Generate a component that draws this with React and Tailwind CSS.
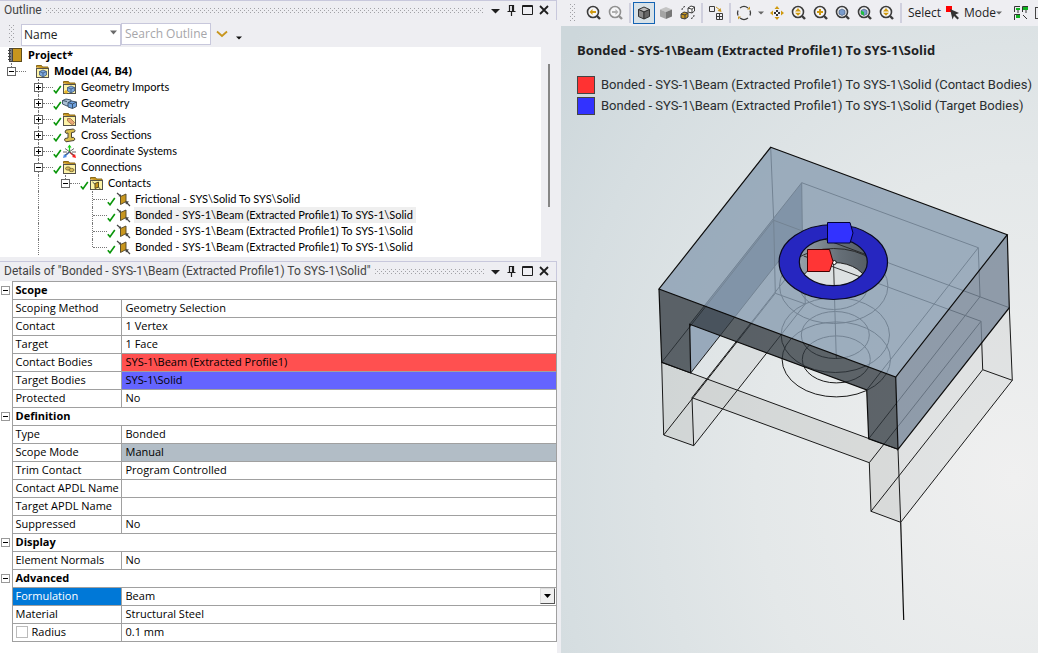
import React, { useState } from "react";
import clsx from "clsx";

const CONTACT_NAME = "Bonded - SYS-1\\Beam (Extracted Profile1) To SYS-1\\Solid";

const treeRows = [
  { level: 0, box: "minus", last: true, icon: "model", label: "Model (A4, B4)", bold: true },
  { level: 1, box: "plus", check: true, icon: "imports", label: "Geometry Imports" },
  { level: 1, box: "plus", check: true, icon: "geometry", label: "Geometry" },
  { level: 1, box: "plus", check: true, icon: "materials", label: "Materials" },
  { level: 1, box: "plus", check: true, icon: "section", label: "Cross Sections" },
  { level: 1, box: "plus", check: true, icon: "axes", label: "Coordinate Systems" },
  { level: 1, box: "minus", check: true, icon: "connections", label: "Connections" },
  { level: 2, box: "minus", last: true, check: true, icon: "contacts", label: "Contacts" },
  { level: 3, check: true, icon: "contact", label: "Frictional - SYS\\Solid To SYS\\Solid" },
  { level: 3, check: true, icon: "contact", label: CONTACT_NAME, selected: true },
  { level: 3, check: true, icon: "contact", label: CONTACT_NAME },
  { level: 3, last: true, check: true, icon: "contact", label: CONTACT_NAME },
];

const detailGroups = [
  {
    title: "Scope",
    rows: [
      { name: "Scoping Method", value: "Geometry Selection" },
      { name: "Contact", value: "1 Vertex" },
      { name: "Target", value: "1 Face" },
      { name: "Contact Bodies", value: "SYS-1\\Beam (Extracted Profile1)", color: "bg-[#ff5050]" },
      { name: "Target Bodies", value: "SYS-1\\Solid", color: "bg-[#6464ff]" },
      { name: "Protected", value: "No" },
    ],
  },
  {
    title: "Definition",
    rows: [
      { name: "Type", value: "Bonded" },
      { name: "Scope Mode", value: "Manual", color: "bg-[#b2bdc6]" },
      { name: "Trim Contact", value: "Program Controlled" },
      { name: "Contact APDL Name", value: "" },
      { name: "Target APDL Name", value: "" },
      { name: "Suppressed", value: "No" },
    ],
  },
  { title: "Display", rows: [{ name: "Element Normals", value: "No" }] },
  {
    title: "Advanced",
    rows: [
      { name: "Formulation", value: "Beam", type: "select" },
      { name: "Material", value: "Structural Steel" },
      { name: "Radius", value: "0.1 mm", type: "check" },
    ],
  },
];

const Folder = ({ children }) => (
  <>
    <path d="M1.5 3.5V1.5h5l1 1.5h5.5v2" fill="#c8961e" stroke="#8a6a1c" />
    <rect x="1.5" y="4.5" width="12" height="9" fill="#fdf3a8" stroke="#55524a" />
    {children}
  </>
);

const SmallCube = ({ x = 4, y = 5 }) => (
  <g transform={`translate(${x} ${y})`} stroke="#2f4a70" strokeWidth="0.7">
    <path d="M0.5 2.5 4 1l3.5 1.5v3.5L4 8 0.5 6z" fill="#7fa9dc" />
    <path d="M0.5 2.5 4 4l3.5-1.5M4 4v4" fill="none" />
  </g>
);

const treeIcons = {
  model: (
    <Folder>
      <SmallCube />
    </Folder>
  ),
  imports: (
    <Folder>
      <SmallCube x={5} />
      <path d="M2 12h4M4 10v4" stroke="#e0a000" />
    </Folder>
  ),
  geometry: (
    <g stroke="#33485f" strokeWidth="0.9">
      <path d="M0.5 4.5 4 3l5 1v5l-4 1-4.5-2z" fill="#a9bfd4" />
      <path d="M6 6.5 9.5 5l5 1v4.5l-4 2-4.5-1.5z" fill="#6fa2e0" />
      <path d="M6 6.5l4.5 1.5 4-2M10.5 8v4.5M0.5 4.5l4.5 1" fill="none" />
    </g>
  ),
  materials: (
    <Folder>
      <path d="M5.5 6.5h3l4 4-2 2.5-5-4z" fill="#e9a878" stroke="#9b6a45" strokeWidth="0.8" />
    </Folder>
  ),
  section: (
    <path
      d="M4 2l7.500-1 1.500 1.500-.5 1.500-3 .6v5l2-.3 1.500 1.700-1 1.500-8 1.300L2.500 12l.5-1.500 3-.6V5L4 5.300 3 4z"
      fill="#dcc050"
      stroke="#4b4534"
    />
  ),
  axes: (
    <g fill="none" strokeWidth="1.3">
      <path d="M7.5 8V2" stroke="#18d018" />
      <path d="M5.5 3.5l2-3 2 3z" fill="#18d018" stroke="none" />
      <path d="M7.5 8l4.5 4" stroke="#e02020" />
      <path d="M14 14l-4-1 3-3z" fill="#ff2020" stroke="none" />
      <path d="M7.5 8L3 12" stroke="#3070d0" />
      <path d="M1 14l1-4 3 3z" fill="#5090e8" stroke="none" />
      <path d="M3 4.5L12 11M12 4.5L3 11M1 8h4M10 8h4" stroke="#555" strokeWidth="0.9" />
    </g>
  ),
  connections: (
    <Folder>
      <ellipse cx="6" cy="8.5" rx="2.5" ry="1.6" fill="#d9bb58" stroke="#80703c" />
      <ellipse cx="9.5" cy="10" rx="2.5" ry="1.6" fill="#d9bb58" stroke="#80703c" />
    </Folder>
  ),
  contacts: (
    <Folder>
      <path d="M3.5 6l8 7" stroke="#444" />
      <path d="M6 7.5L9.5 6v5L6 12.5z" fill="#c8961e" stroke="#5a4a20" />
    </Folder>
  ),
  contact: (
    <g>
      <path d="M1 1l4 3.5M10 10l4 4" stroke="#444" strokeWidth="1.2" />
      <path d="M5 4.5L2.5 4.2 4.6 2zM9 9l4 .5L10 12.500z" fill="#444" />
      <path d="M4.500 4.500L10 2v7.500l-5.500 3z" fill="#c8961e" stroke="#4f4426" strokeWidth="0.9" />
    </g>
  ),
};

const TreeIcon = ({ name }) => (
  <svg className="size-[15px] shrink-0" viewBox="0 0 15 15" aria-hidden="true">
    {treeIcons[name]}
  </svg>
);

const CheckMark = () => (
  <svg className="mt-1 size-[9px] shrink-0" viewBox="0 0 9 9" aria-hidden="true">
    <path d="M0.8 5.2L3 7.8 7.8 1" fill="none" stroke="#0a960a" strokeWidth="1.6" />
  </svg>
);

const ToggleBox = ({ kind, label, className }) => (
  <button
    type="button"
    aria-label={label}
    className={clsx("size-[9px] shrink-0 border bg-white", className)}
  >
    <svg className="block size-[7px]" viewBox="0 0 7 7" aria-hidden="true">
      <path d={kind === "plus" ? "M1 3.5h5M3.5 1v5" : "M1 3.5h5"} stroke="#000" />
    </svg>
  </button>
);

const GripDots = ({ className }) => (
  <span
    className={clsx(
      "bg-[#a2a2a6] [mask-image:radial-gradient(circle_at_0.5px_0.5px,#000_0.7px,transparent_0.7px),radial-gradient(circle_at_2.5px_2.5px,#000_0.7px,transparent_0.7px)] [mask-size:4px_4px]",
      className
    )}
  />
);

const PanelTitle = ({ children }) => (
  <div className="flex h-5 items-center border-t border-r border-[#c8c8dc] pb-px pl-1 text-xs text-[#444]">
    <h2 className="shrink-0 font-['Roboto',sans-serif] font-normal">{children}</h2>
    <GripDots className="mx-1 h-[5px] flex-1" />
    <div className="flex items-center pr-1">
      <button type="button" aria-label="Panel menu" className="w-[15px]">
        <svg className="block size-[15px]" viewBox="0 0 15 15">
          <path d="M3 6h9l-4.5 4.5z" fill="#1e1e1e" />
        </svg>
      </button>
      <button type="button" aria-label="Pin" className="w-4">
        <svg className="block size-4" viewBox="0 0 16 16" fill="none" stroke="#1e1e1e">
          <path d="M6.5 9V3.5h4V9M9.5 3.5V9M4.5 9.5h8M8.5 10v4" strokeWidth="1.2" />
        </svg>
      </button>
      <button type="button" aria-label="Maximize" className="w-[17px]">
        <svg className="block h-4 w-[17px]" viewBox="0 0 17 16" fill="none" stroke="#1e1e1e">
          <path d="M3.5 3.5h10v9h-10zM3 4.5h11" />
        </svg>
      </button>
      <button type="button" aria-label="Close" className="w-4">
        <svg className="block size-4" viewBox="0 0 16 16" fill="none" stroke="#1e1e1e">
          <path d="M4 4l8 8M12 4l-8 8" strokeWidth="1.8" />
        </svg>
      </button>
    </div>
  </div>
);

const VLine = ({ className }) => (
  <span className={clsx("ml-1 block w-px border-l border-dotted border-[#777]", className)} />
);

const TreeRow = ({ row }) => {
  const { level, box, last, check, icon, label, bold, selected } = row;
  return (
    <li className="flex h-4 items-center pl-[7px]">
      {/* open branches above this row keep their guide lines running */}
      {Array.from({ length: level }).map((_, i) => (
        <span key={i} className="h-4 w-[27px] shrink-0">
          {i === 1 && level > 1 && <VLine className="h-4" />}
        </span>
      ))}
      {box ? (
        <span className="flex h-4 w-[9px] shrink-0 flex-col">
          <VLine className="h-1" />
          <ToggleBox kind={box} label={`Toggle ${label}`} className="border-[#666]" />
          {!last && <VLine className="h-[3px]" />}
        </span>
      ) : (
        <span className="h-4 w-[9px] shrink-0">
          <VLine className={last ? "h-2" : "h-4"} />
        </span>
      )}
      <span
        className={clsx(
          "h-px shrink-0 border-t border-dotted border-[#777]",
          box ? "w-[10px]" : "-ml-1 w-[14px]"
        )}
      />
      <span className="flex w-[9px] shrink-0">{check && <CheckMark />}</span>
      <TreeIcon name={icon} />
      <a
        href="#"
        className={clsx(
          "ml-[3px] h-4 px-px leading-4 whitespace-nowrap text-black",
          bold ? "font-bold" : "font-['Lato',sans-serif]",
          selected && "bg-[#efefef] pr-[3px]"
        )}
      >
        {label}
      </a>
    </li>
  );
};

const Outline = () => (
  <section className="flex flex-col">
    <PanelTitle>Outline</PanelTitle>
    <div className="flex h-[27px] items-center pl-[9px]">
      <GripDots className="h-[18px] w-[6px]" />
      <div className="relative ml-[6px]">
        <select
          aria-label="Search by"
          className="h-[22px] w-[100px] appearance-none border border-[#c8c8dc] bg-white pl-[2px] text-xs leading-5 text-[#222]"
        >
          <option>Name</option>
        </select>
        <svg className="pointer-events-none absolute top-2 right-1 size-[7px]" viewBox="0 0 7 7">
          <path d="M0 1.5h7L3.5 5.5z" fill="#6a6a6a" />
        </svg>
      </div>
      <input
        type="text"
        aria-label="Search Outline"
        placeholder="Search Outline"
        className="h-[22px] w-[90px] border border-[#c8c8dc] bg-white pl-[3px] text-xs placeholder:text-[#a6a6aa]"
      />
      <button type="button" aria-label="Expand search" className="ml-[5px]">
        <svg className="block h-2 w-3" viewBox="0 0 12 8">
          <path d="M1 1.5l5 4.5 5-4.5" fill="none" stroke="#c8961e" strokeWidth="1.8" />
        </svg>
      </button>
      <button type="button" aria-label="More options" className="mt-2 ml-2">
        <svg className="block h-1 w-[6px]" viewBox="0 0 6 4">
          <path d="M0 0.5h6L3 3.5z" fill="#111" />
        </svg>
      </button>
    </div>
    <div className="flex text-[11px]">
      <ul className="h-[210px] flex-1 overflow-hidden bg-white">
        <li className="flex h-4 items-center pl-2">
          <svg className="size-[14px]" viewBox="0 0 14 14" aria-hidden="true">
            <rect x="4.5" y="0.5" width="9" height="13" fill="#c8961e" stroke="#5f4d1c" />
            <rect x="1.5" y="0.5" width="3" height="13" fill="#7d7d7d" stroke="#444" />
            <path d="M0 2.5h3M0 5.5h3M0 8.5h3M0 11.5h3" stroke="#444" />
          </svg>
          <a href="#" className="ml-[6px] leading-4 font-bold text-black">
            Project*
          </a>
        </li>
        {treeRows.map((row, i) => (
          <TreeRow key={i} row={row} />
        ))}
      </ul>
      <div className="flex w-4 pt-[17px] pl-[7px]">
        <span className="h-[143px] w-[2px] bg-[#868686]" />
      </div>
    </div>
  </section>
);

const DetailRow = ({ row }) => {
  const [checked, setChecked] = useState(false);
  return (
    <tr className="h-[18px]">
      <td className="bg-white" />
      <th
        scope="row"
        className={clsx(
          "border border-[#a0a0a0] pb-[2px] pl-[3px] text-left font-normal whitespace-nowrap",
          row.type === "select" ? "bg-[#0078d7] text-white" : "text-black"
        )}
      >
        {row.type === "check" ? (
          <label className="flex items-center gap-1">
            <input
              type="checkbox"
              checked={checked}
              onChange={(e) => setChecked(e.target.checked)}
              className="size-3 appearance-none border border-[#bbb] bg-white checked:bg-[#0078d7]"
            />
            {row.name}
          </label>
        ) : (
          row.name
        )}
      </th>
      {row.type === "select" ? (
        <td className="border border-[#a0a0a0] pl-1 text-black">
          <div className="relative">
            <select
              aria-label={row.name}
              className="block h-[17px] w-full appearance-none pb-[2px] leading-[15px]"
            >
              <option>{row.value}</option>
            </select>
            <svg
              className="pointer-events-none absolute top-0 right-px h-4 w-[15px] border border-[#ddd] border-r-[#555] border-b-[#555] bg-[#f0f0f0]"
              viewBox="0 0 13 14"
            >
              <path d="M3 5h7L6.5 9z" fill="#000" />
            </svg>
          </div>
        </td>
      ) : (
        <td className={clsx("border border-[#a0a0a0] pb-[2px] pl-1 text-black", row.color)}>
          {row.value}
        </td>
      )}
    </tr>
  );
};

const Details = () => (
  <section className="mt-1 flex flex-1 flex-col">
    <PanelTitle>Details of "{CONTACT_NAME}"</PanelTitle>
    <div className="flex-1 bg-white">
      <table className="w-full table-fixed border-collapse text-[11px] leading-[15px]">
        <colgroup>
          <col className="w-3" />
          <col className="w-[109px]" />
          <col />
        </colgroup>
        {detailGroups.map((group) => (
          <tbody key={group.title}>
            <tr className="h-[18px]">
              <td className="pl-px">
                <ToggleBox kind="minus" label={`Toggle ${group.title}`} className="block border-[#999]" />
              </td>
              <th
                colSpan={2}
                scope="colgroup"
                className="border border-[#a0a0a0] pb-[2px] pl-[3px] text-left font-bold text-black"
              >
                {group.title}
              </th>
            </tr>
            {group.rows.map((row) => (
              <DetailRow key={row.name} row={row} />
            ))}
          </tbody>
        ))}
      </table>
    </div>
  </section>
);

const Magnifier = ({ children, color = "#3c3c3c" }) => (
  <g transform="translate(-1 0)">
    <circle cx="11" cy="12" r="5.5" fill="#fff" fillOpacity="0.5" stroke={color} strokeWidth="1.6" />
    <path d="M15 16l3 3" stroke={color} strokeWidth="2.4" />
    {children}
  </g>
);

const toolIcons = {
  zoomBack: (
    <Magnifier>
      <path d="M7.5 12l3-3v2h3.5v2h-3.5v2z" fill="#d09a10" />
    </Magnifier>
  ),
  zoomForward: (
    <Magnifier color="#909090">
      <path d="M14.5 12l-3-3v2H8v2h3.5v2z" fill="#b0b0b0" />
    </Magnifier>
  ),
  shadedEdges: (
    <g stroke="#333" strokeLinejoin="round">
      <path d="M5.5 9.5L11 7l5.5 2.5L11 12z" fill="#bbb" />
      <path d="M5.5 9.5L11 12v7l-5.5-2.5z" fill="#8a8a8a" />
      <path d="M16.5 9.5L11 12v7l5.5-2.5z" fill="#666" />
    </g>
  ),
  shaded: (
    <g>
      <path d="M5 9.5L11 7l6 2.5-6 2.5z" fill="#c4c4c4" />
      <path d="M5 9.5l6 2.5v7l-6-2.5z" fill="#a4a4a4" />
      <path d="M17 9.5L11 12v7l6-2.5z" fill="#777" />
    </g>
  ),
  swap: (
    <g stroke="#3c3c3c">
      <path d="M11 8l3-2 3.5 1v4l-2.5 2-4-1z" fill="#fff" />
      <path d="M11 8l4 1.2L17.5 7M15 9.2V13" fill="none" />
      <path d="M4 14l3-2 4 1v4l-3 2-4-1z" fill="#c8961e" />
      <path d="M4 14l4 1 3-2M8 15v4" fill="none" />
      <path d="M5 10c0-2 1-3 3-3.500M17 15c0 2-1 3-3 3.500" fill="none" strokeDasharray="2 1" />
    </g>
  ),
  layout: (
    <g fill="none" stroke="#3c3c3c">
      <path d="M4.5 6.5h5v5h-5zM11.5 13.5h6v6h-6zM14.5 13.5v6M11.5 16.5h6" />
      <path d="M11 7l4 3" stroke="#c8961e" />
      <path d="M16.5 12l-4-1 3-3z" fill="#c8961e" stroke="none" />
    </g>
  ),
  rotate: (
    <g fill="none" stroke="#3c3c3c" strokeWidth="1.3">
      <path d="M7 8a6.500 6.500 0 0 1 8 0M17 10.500a6.500 6.500 0 0 1 0 5M15 18a6.500 6.500 0 0 1-8 0M5 15.500a6.500 6.500 0 0 1 0-5" />
      <path d="M14 9.5h3V6.500zM8 16.5H5v3z" fill="#c8961e" stroke="none" />
    </g>
  ),
  pan: (
    <g fill="#d09a10">
      <path d="M11 6l2.5 3h-5zM11 20l2.5-3h-5zM4 13l3-2.5v5zM18 13l-3-2.5v5z" />
      <path d="M10 10h2v2h-2zM10 14h2v2h-2zM8 12h2v2H8zM12 12h2v2h-2z" fill="#333" />
      <path d="M10 12h2v2h-2z" fill="#fff" />
    </g>
  ),
  zoom: (
    <Magnifier>
      <path d="M8 11.5l3-3.5 3 3.5zM8 12.8h6l-3 3z" fill="#d09a10" />
    </Magnifier>
  ),
  boxZoom: (
    <Magnifier>
      <path d="M8 12h6M11 9v6" stroke="#d09a10" strokeWidth="2" />
    </Magnifier>
  ),
  fit: (
    <Magnifier>
      <path d="M8 10.5L11 9l3 1.5v3.5l-3 1.5-3-1.5z" fill="#7a9ccc" stroke="#465a78" strokeWidth="0.7" />
    </Magnifier>
  ),
  fitSelected: (
    <Magnifier>
      <path d="M8 10.5L11 9l3 1.5v3.5l-3 1.5-3-1.5z" fill="#7a9ccc" stroke="#465a78" strokeWidth="0.7" />
      <path d="M8 10.5l3 1.5v3.5l-3-1.5z" fill="#20c040" />
    </Magnifier>
  ),
};

const ToolButton = ({ icon, label, active }) => (
  <button
    type="button"
    aria-label={label}
    className={clsx(
      "flex h-[22px] w-[22px] shrink-0 items-center justify-center",
      active && "border border-[#1464b4] bg-[#d8e2e8]"
    )}
  >
    <svg className="block size-[22px] shrink-0" viewBox="0 2 22 22">
      {toolIcons[icon]}
    </svg>
  </button>
);

const Separator = () => <span className="mx-[2px] h-5 w-[2px] shrink-0 bg-[#d0d0de]" />;

const Caret = () => (
  <svg className="h-1 w-[6px] shrink-0" viewBox="0 0 6 4" aria-hidden="true">
    <path d="M0 0.5h6L3 3.5z" fill="#666" />
  </svg>
);

const GraphicsToolbar = () => (
  <div className="flex h-[26px] items-center overflow-hidden bg-[#eeeef2] text-xs text-[#222]">
    <GripDots className="mr-2 ml-[9px] h-[18px] w-[5px] shrink-0" />
    <ToolButton icon="zoomBack" label="Previous view" />
    <ToolButton icon="zoomForward" label="Next view" />
    <Separator />
    <ToolButton icon="shadedEdges" label="Shaded with edges" active />
    <ToolButton icon="shaded" label="Shaded" />
    <ToolButton icon="swap" label="Swap bodies" />
    <Separator />
    <ToolButton icon="layout" label="Layout" />
    <Separator />
    <ToolButton icon="rotate" label="Rotate" />
    <button type="button" aria-label="Rotate options" className="flex w-[11px] shrink-0 justify-center">
      <Caret />
    </button>
    <ToolButton icon="pan" label="Pan" />
    <ToolButton icon="zoom" label="Zoom" />
    <ToolButton icon="boxZoom" label="Box zoom" />
    <ToolButton icon="fit" label="Fit" />
    <ToolButton icon="fitSelected" label="Fit selected" />
    <ToolButton icon="zoom" label="Zoom to range" />
    <Separator />
    <button type="button" className="ml-1 w-8 shrink-0 text-left">
      Select
    </button>
    <button type="button" className="ml-[6px] flex shrink-0 items-center">
      <svg className="mr-1 size-[14px]" viewBox="0 0 14 14" aria-hidden="true">
        <path d="M0 0h6v6H0z" fill="#ff0000" />
        <path d="M4 3l9 4-3.5 1.5L13 12l-1.5 1.5L8 10l-1.5 3.5z" fill="#333" />
      </svg>
      Mode
      <Caret />
    </button>
    <button type="button" aria-label="Selection filter" className="ml-[11px] shrink-0">
      <svg className="block size-4" viewBox="0 0 16 16" fill="none" stroke="#333">
        <path d="M1.5 7V1.5H7M9.5 7V1.5H15M1.5 15V9.5H7M5 5v3M13 4v4" />
        <path d="M3 3h4v2H3zM10 2h5v3h-5zM3 10h4v3H3z" fill="#10b020" stroke="none" />
        <path d="M10 10l4 4" />
      </svg>
    </button>
    <span className="ml-[6px] h-3 w-1 shrink-0 border border-[#444]" />
  </div>
);

const Ellipses = () =>
  [
    [833.7, 286],
    [835.3, 335],
    [836.3, 359.4],
  ].map(([cx, cy]) => (
    <g key={cy}>
      <ellipse cx={cx} cy={cy} rx="54.2" ry="37.5" />
      <ellipse cx={cx} cy={cy} rx="34" ry="23.5" />
    </g>
  ));

const Model = () => (
  <svg className="block w-full" viewBox="561 118 477 535" role="img" aria-label="Model view">
    <defs>
      <linearGradient id="bore" x1="0" x2="1" y1="0" y2="0">
        <stop offset="0" stopColor="#97a2aa" />
        <stop offset="0.6" stopColor="#656e76" />
        <stop offset="1" stopColor="#555d64" />
      </linearGradient>
      <clipPath id="hole">
        <ellipse cx="833.3" cy="262" rx="34" ry="23.7" />
      </clipPath>
    </defs>

    {/* lower body, only its translucent faces and edges */}
    <path
      d="M661.7 362.3L898 449.3 900.7 522.3 871 511.3 869.3 462.7 692 397.7 693.7 445.7 663.7 435z"
      fill="#bfc1be"
      fillOpacity="0.4"
    />
    <path d="M898 449.3L1009.3 307.7 1012.3 380.3 900.7 522.3z" fill="#d0d2d2" fillOpacity="0.4" />
    <path d="M693.7 445.7L805.3 304 803.7 256 692 397.7z" fill="#d0d2d2" fillOpacity="0.4" />
    <path d="M689.7 324.3L801.7 182.7 802.3 231.2 690.7 373z" fill="#98a9bb" />
    <path d="M704.3 305.8L801.7 182.7 802.3 231.2 734.7 317.1z" fill="#627083" />

    <g fill="none" stroke="#1a1a1a">
      <path d="M661.7 362.3L663.7 435 693.7 445.7 692 397.7 869.3 462.7 871 511.3 900.7 522.3 898 449.3" />
      <path d="M661.7 362.3L898 449.3M900.7 522.3L1012.3 380.3 1009.3 307.7M871 511.3L982.7 369.7 1012.3 380.3M982.7 369.7L981 321.3 869.3 462.7" />
      <path d="M663.7 435L775.3 293.3 805.3 304 693.7 445.7M692 397.7L803.7 256 981 321.3M803.7 256L805.3 304" />
      <path d="M770.7 147.3L773.7 220.3 775.3 293.3M661.7 362.3L773.7 220.3 1009.3 307.7" />
      <path d="M689.7 324.3L801.7 182.7 978.3 247.7 866.7 390M801.7 182.7L802.3 231.2 690.7 373M978.3 247.7L980 296.7 868.7 438.7" />
      <path d="M833.5 262L836.3 359" />
      <Ellipses />
    </g>

    {/* upper solid */}
    <path d="M770.7 147.3L1007.3 234.7 895.7 377 659 289z" fill="#8a9db1" fillOpacity="0.8" />
    <path d="M1007.3 234.7L1009.3 307.7 898 449.3 895.7 377z" fill="#788799" fillOpacity="0.8" />
    <path
      d="M659 289L895.7 377 898 449.3 868.7 438.7 866.7 390 689.7 324.3 690.7 373 661.7 362.3z"
      fill="#30383f"
      fillOpacity="0.76"
    />
    <g fill="none" stroke="#0c0c0c" strokeWidth="1.2">
      <path d="M770.7 147.3L1007.3 234.7 895.7 377 659 289z" />
      <path d="M1007.3 234.7L1009.3 307.7 898 449.3 895.7 377" />
      <path d="M659 289L661.7 362.3 690.7 373 689.7 324.3 866.7 390 868.7 438.7 898 449.3" />
      <path d="M900.7 522.3L903.7 620" />
    </g>

    {/* bore seen through the ring */}
    <g clipPath="url(#hole)">
      <rect x="799" y="238" width="69" height="48" fill="url(#bore)" />
      <ellipse cx="833.7" cy="286" rx="34" ry="23.5" fill="#dde1e2" stroke="#222" />
      <g fill="none" stroke="#222" strokeWidth="0.9">
        <ellipse cx="833.7" cy="286" rx="54.2" ry="37.5" />
        <path d="M773.7 220.3L1009.3 307.7M803.7 256L981 321.3M833.5 262L836.3 359" />
      </g>
    </g>
    <path
      fillRule="evenodd"
      d="M779.1 262a54.2 37.5 0 1 0 108.4 0a54.2 37.5 0 1 0-108.4 0zM799.3 262a34 23.7 0 1 0 68 0a34 23.7 0 1 0-68 0z"
      fill="#2626c0"
      stroke="#0a0a20"
      strokeWidth="1.2"
    />
    <circle cx="834.3" cy="262.5" r="2" fill="#fff" stroke="#111" />
    <path d="M807.5 249.5h22l3.5 12-3.5 10h-22z" fill="#ff3535" stroke="#400" />
    <path d="M827.5 222.5h22.5l3 10.5-3 10h-22.5z" fill="#3232ff" stroke="#003" />
  </svg>
);

const LegendItem = ({ color, children }) => (
  <li className="flex h-[21px] items-center gap-[6px] whitespace-nowrap">
    <span className={clsx("size-[18px] shrink-0 border border-[#444]", color)} />
    {children}
  </li>
);

const Viewport = () => (
  <main className="flex min-w-0 flex-col">
    <GraphicsToolbar />
    <div className="flex-1 overflow-hidden bg-[radial-gradient(ellipse_120%_110%_at_95%_72%,#f0f0f0,#e4e8e9_45%,#d6dee1_80%,#cdd7db)] text-[13px] text-[#2a2e30]">
      <div className="h-[92px] pt-[15px] pl-4">
        <h1 className="leading-[18px] font-bold whitespace-nowrap text-[#1e2224]">{CONTACT_NAME}</h1>
        <ul className="mt-[15px] font-['Roboto',sans-serif]">
          <LegendItem color="bg-[#ff3232]">{CONTACT_NAME} (Contact Bodies)</LegendItem>
          <LegendItem color="bg-[#3232ff]">{CONTACT_NAME} (Target Bodies)</LegendItem>
        </ul>
      </div>
      <Model />
    </div>
  </main>
);

export default function App() {
  return (
    <div className="grid min-h-screen grid-cols-[561fr_477fr] bg-[#eeeef2] font-['Open_Sans','Noto_Sans',sans-serif]">
      <div className="flex min-w-0 flex-col pr-1">
        <Outline />
        <Details />
      </div>
      <Viewport />
    </div>
  );
}
